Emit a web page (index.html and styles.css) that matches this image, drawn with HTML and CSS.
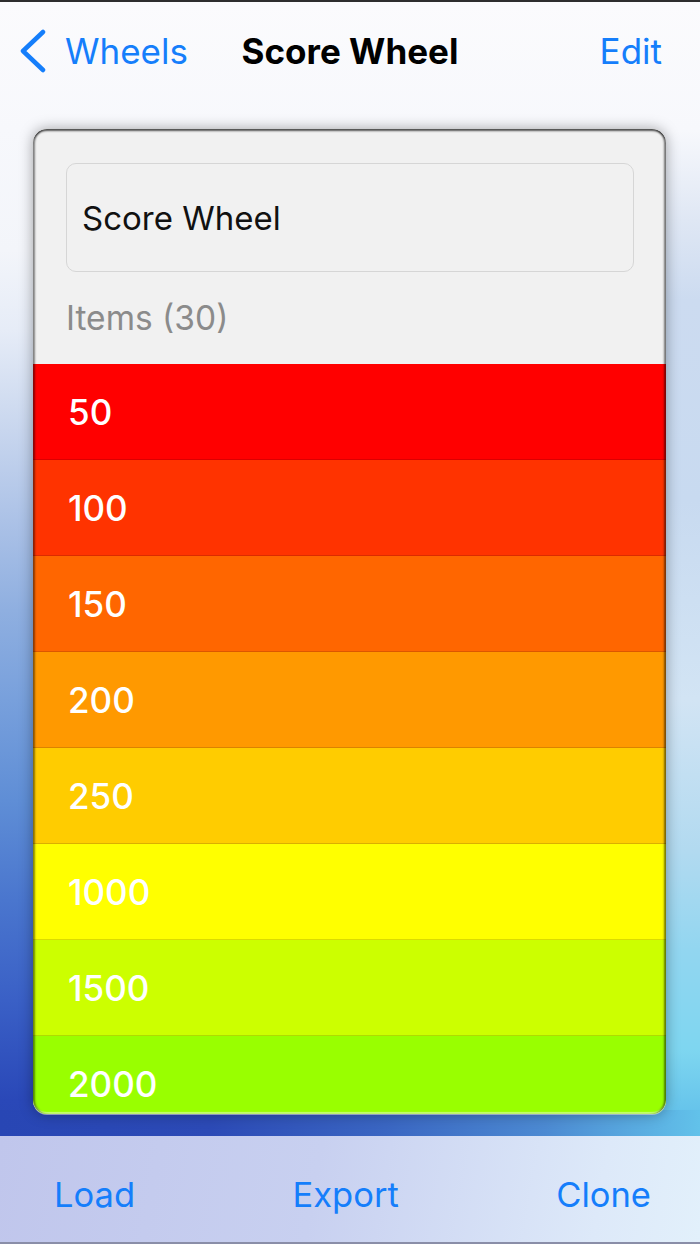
FILE: index.html
```html
<!DOCTYPE html>
<html lang="en">
<head>
    <meta charset="UTF-8">
    <title>Score Wheel</title>
    <meta name="viewport" content="width=device-width, initial-scale=1.0">
    <link rel="stylesheet" href="styles.css">
</head>
<body>
    <div class="nav">
        <a class="back">
            <svg class="chevron" width="28" height="44" viewBox="0 0 28 44">
                <path d="M24 3 L4 22 L24 41" fill="none" stroke="#157efb" stroke-width="4.5" stroke-linecap="round" stroke-linejoin="round"/>
            </svg>
            <span>Wheels</span>
        </a>
        <h1 class="title">Score Wheel</h1>
        <a class="edit">Edit</a>
    </div>

    <div class="main">
        <div class="card">
            <div class="card-head">
                <div class="name-field">Score Wheel</div>
                <div class="items-label">Items (30)</div>
            </div>
            <div class="rows">
                <div class="row c1">50</div>
                <div class="row c2">100</div>
                <div class="row c3">150</div>
                <div class="row c4">200</div>
                <div class="row c5">250</div>
                <div class="row c6">1000</div>
                <div class="row c7">1500</div>
                <div class="row c8">2000</div>
            </div>
        </div>
    </div>

    <div class="toolbar">
        <a>Load</a>
        <a>Export</a>
        <a>Clone</a>
    </div>
</body>
</html>
```

FILE: styles.css
```css
html, body {
    margin: 0;
    height: 100%;
}
body {
    font-family: Inter, "Liberation Sans", Arial, sans-serif;
    display: flex;
    flex-direction: column;
    height: 1244px;
    overflow: hidden;
    background-color: #e8eef8;
    background-image:
        linear-gradient(to right, #2846b4 0%, #2c4ab6 30%, #3a66c2 55%, #4c8ad2 78%, #62c2ea 100%),
        linear-gradient(to bottom, #fbfbfd 0px, #f7f8fc 130px, #f3f5fa 250px, #e6ecf7 330px, #c8d6ee 430px, #acc2e7 520px, #8fafe0 610px, #78a0dc 700px, #5f8ed6 800px, #4a76ce 900px, #3a60c6 1000px, #2a48b8 1100px, #2846b4 1140px),
        linear-gradient(to bottom, #fbfbfd 0px, #f7f8fc 130px, #dfe7f4 220px, #ccdbf0 300px, #c8daf0 500px, #d2e4f4 700px, #b2daf0 850px, #92d6f0 950px, #7ed6f0 1050px, #66c4eb 1110px, #62c2ea 1140px);
    background-size: 100% 26px, 50% 100%, 50% 100%;
    background-position: 0 1110px, left top, right top;
    background-repeat: no-repeat;
}
a {
    color: #157efb;
    cursor: pointer;
}

/* top navigation */
.nav {
    border-top: 2px solid #2e2e2e;
    height: 98px;
    display: grid;
    grid-template-columns: 1fr auto 1fr;
    align-items: center;
    padding: 0 38px;
}
.back {
    display: flex;
    align-items: center;
    gap: 18px;
    margin-left: -19px;
    font-size: 35px;
}
.chevron {
    display: block;
}
.title {
    margin: 0;
    font-size: 35px;
    font-weight: 700;
    color: #000;
}
.edit {
    justify-self: end;
    font-size: 35px;
}

/* wheel card */
.main {
    flex: 1;
    display: flex;
    padding: 29px 34px 22px 33px;
    min-height: 0;
}
.card {
    flex: 1;
    position: relative;
    display: flex;
    flex-direction: column;
    border-radius: 14px;
    overflow: hidden;
    background: #f1f1f1;
    box-shadow: 0 0 14px rgba(0,0,0,0.35), 0 1px 0 rgba(255,255,255,0.6);
}
.card::after {
    content: "";
    position: absolute;
    inset: 0;
    border-radius: 14px;
    pointer-events: none;
    box-shadow:
        inset 0 3px 2px -1px rgba(0,0,0,0.65),
        inset 3px 0 2px -1px rgba(0,0,0,0.45),
        inset -3px 0 2px -1px rgba(0,0,0,0.5),
        inset 0 -2px 1px rgba(255,255,255,0.45);
}
.card-head {
    padding: 34px 32px 0 33px;
}
.name-field {
    height: 107px;
    border: 1px solid #d6d6d6;
    border-radius: 10px;
    display: flex;
    align-items: center;
    padding: 0 15px;
    font-size: 33px;
    color: #111;
}
.items-label {
    height: 92px;
    display: flex;
    align-items: center;
    font-size: 33.5px;
    color: #8b8b8b;
}
.rows {
    flex: 1;
    min-height: 0;
    overflow: hidden;
}
.row {
    height: 95px;
    border-bottom: 1px solid rgba(0,0,0,0.14);
    display: flex;
    align-items: center;
    padding-left: 35px;
    font-size: 35px;
    font-weight: 500;
    color: #fff;
}
.c1 { background: #ff0000; }
.c2 { background: #ff3300; }
.c3 { background: #ff6600; }
.c4 { background: #ff9900; }
.c5 { background: #ffcc00; }
.c6 { background: #ffff00; }
.c7 { background: #ccff00; }
.c8 { background: #99ff00; }

/* bottom toolbar */
.toolbar {
    box-sizing: border-box;
    height: 108px;
    padding: 10px 49px 0 54px;
    border-bottom: 2px solid #8a8ea8;
    display: flex;
    justify-content: space-between;
    align-items: center;
    background: linear-gradient(100deg, #c0c6ec 0%, #c8d0f0 45%, #dde9f9 85%, #e2f0fb 100%);
}
.toolbar a {
    font-size: 34.5px;
}
```
